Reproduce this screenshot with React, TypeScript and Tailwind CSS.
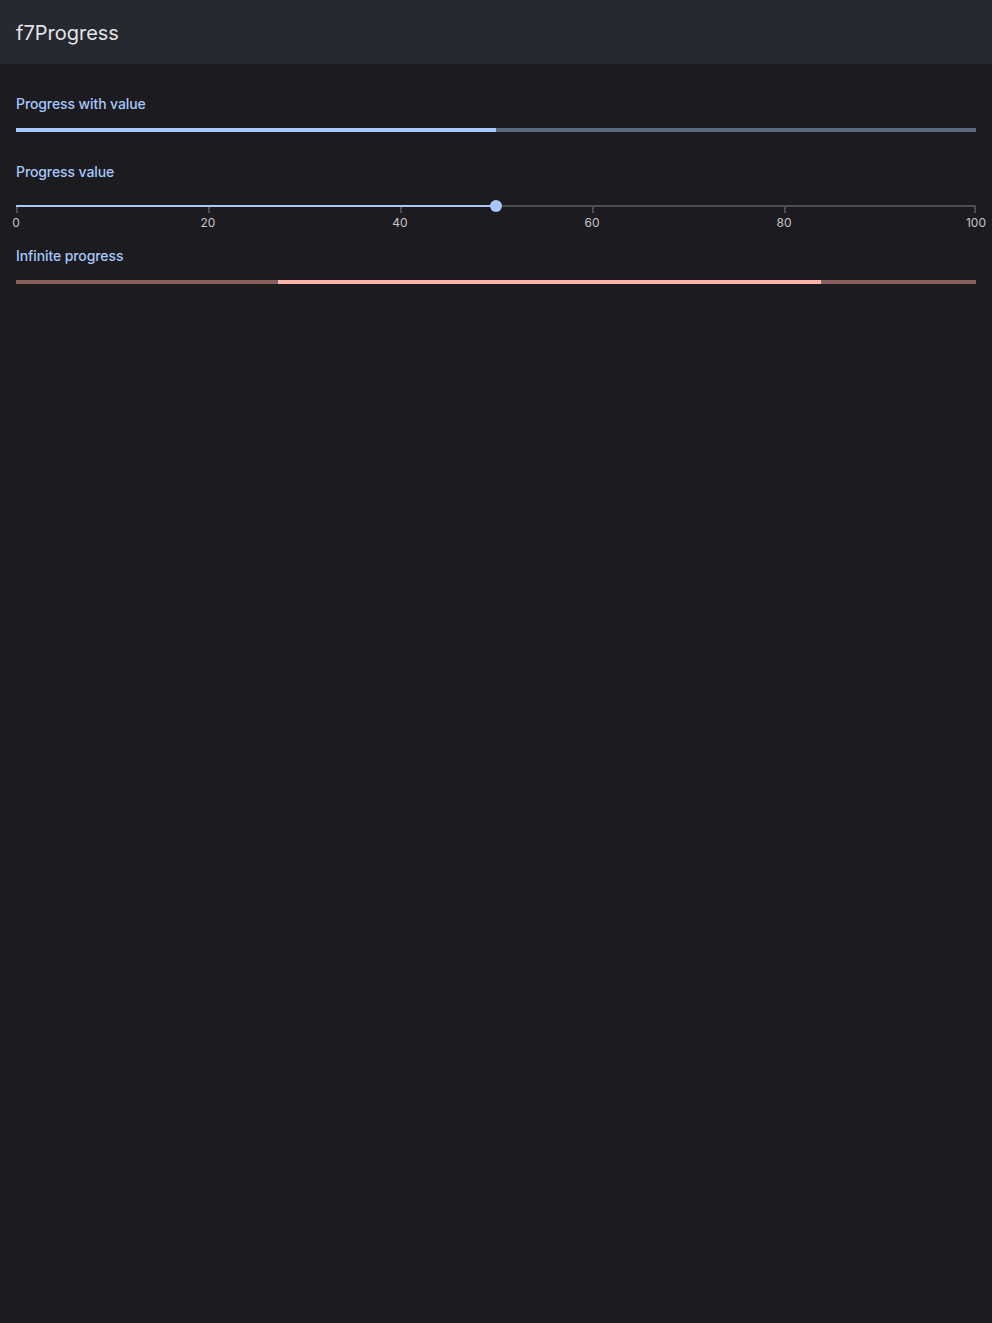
import React from "react";

export default function App() {
  const ticks = [0, 20, 40, 60, 80];
  return (
    <div
      className="min-h-[1323px] w-full bg-[#1c1b1f]"
      style={{ fontFamily: "Inter, 'Noto Sans', sans-serif" }}
    >
      <div className="h-16 bg-[#262930] flex items-center px-4 pt-[2px]">
        <span className="text-[20px] text-[#e3e3e6]">f7Progress</span>
      </div>
      <div className="px-4 pt-[31px] flex flex-col">
        <div className="text-[14px] leading-[18px] font-medium tracking-[-0.1px] text-[#a8c7fa]">Progress with value</div>
        <div className="mt-[15px] h-1 w-full bg-[#5d6b80] flex">
          <div className="h-full w-1/2 bg-[#a8c7fa]" />
        </div>

        <div className="mt-[31px] text-[14px] leading-[18px] font-medium tracking-[-0.1px] text-[#a8c7fa]">Progress value</div>
        <div className="mt-[24px] flex flex-col">
          <div className="relative flex h-[2px] w-full">
            <div className="w-1/2 bg-[#a8c7fa]" />
            <div className="flex-1 bg-[#4a4a4f]" />
            <div className="absolute top-1/2 left-1/2 -translate-x-1/2 -translate-y-1/2 w-3 h-3 rounded-full bg-[#a8c7fa]" />
          </div>
          <div className="flex w-full">
            {ticks.map((t) => (
              <div key={t} className="flex-1 flex flex-col items-start">
                <div className="w-[2px] h-[6px] bg-[#4a4a4f]" />
                <div className="mt-[3px] -translate-x-1/2 text-[12px] leading-[14px] text-[#c4c4c8]">{t}</div>
              </div>
            ))}
            <div className="w-0 flex flex-col items-start">
              <div className="w-[2px] h-[6px] -ml-[2px] bg-[#4a4a4f]" />
              <div className="mt-[3px] -translate-x-1/2 text-[12px] leading-[14px] text-[#c4c4c8]">100</div>
            </div>
          </div>
        </div>

        <div className="mt-[17px] text-[14px] leading-[18px] font-medium tracking-[-0.1px] text-[#a8c7fa]">Infinite progress</div>
        <div className="mt-[15px] h-1 w-full bg-[#8a625d] flex">
          <div className="w-[27.3%]" />
          <div className="w-[56.6%] bg-[#ffb4ab]" />
        </div>
      </div>
    </div>
  );
}
